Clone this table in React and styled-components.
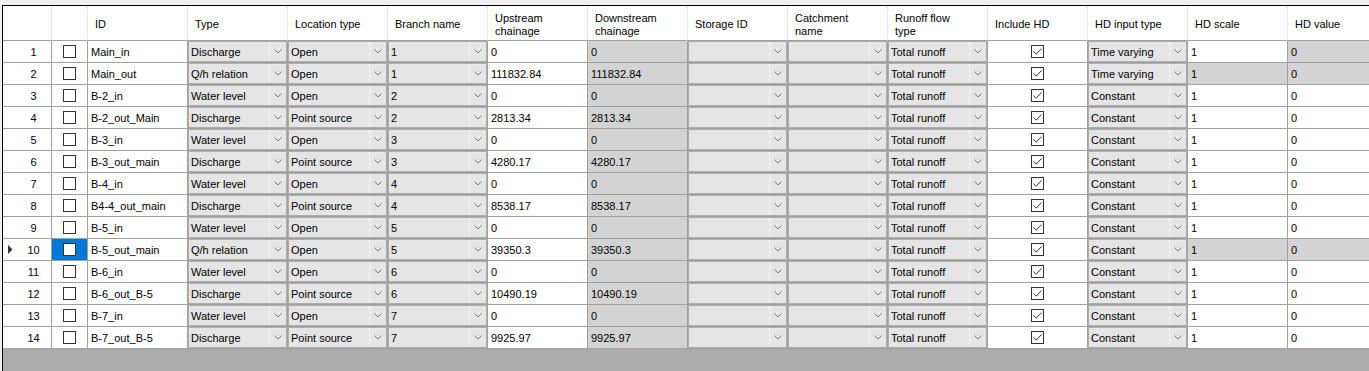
import React from "react";
import styled, { createGlobalStyle } from "styled-components";

const GlobalStyle = createGlobalStyle`
  body {
    margin: 0;
    background: #f0f0f0;
    font-family: "Liberation Sans", Arial, sans-serif;
    font-size: 11px;
    color: #000;
  }
`;

const Frame = styled.div`
  height: 371px;
  box-sizing: border-box;
  padding: 5px 0 0 2px;
  overflow: hidden;
`;

const Grid = styled.div`
  height: 100%;
  box-sizing: border-box;
  border-top: 1px solid #000;
  border-left: 1px solid #000;
  background: #ababab;
  overflow: hidden;
`;

const Row = styled.div`
  display: grid;
  grid-template-columns: 49px 36px repeat(13, 100px);
  height: ${(p) => (p.$header ? 35 : 22)}px;
`;

const HeaderCell = styled.div`
  box-sizing: border-box;
  background: #fff;
  border-right: 1px solid #e5e5e5;
  border-bottom: 1px solid #a0a0a0;
  padding: 3px 4px 0 7px;
  display: flex;
  align-items: center;
  line-height: 13px;
  white-space: pre-line;
`;

const Cell = styled.div`
  box-sizing: border-box;
  border-right: 1px solid #a0a0a0;
  border-bottom: 1px solid #a0a0a0;
  background: ${(p) => (p.$readOnly ? "#d3d3d3" : "#fff")};
  display: flex;
  align-items: center;
  padding-left: 3px;
  white-space: nowrap;
  overflow: hidden;
`;

const RowHeader = styled(Cell)`
  padding: 0;
`;

const Glyph = styled.div`
  width: 14px;
  display: flex;
  justify-content: center;
`;

const RowNumber = styled.div`
  flex: 1;
  text-align: center;
  padding-right: 1px;
`;

const CheckCell = styled(Cell)`
  padding: 0;
  justify-content: center;
  background: ${(p) => (p.$selected ? "#0078d7" : "#fff")};
`;

const Box = styled.div`
  width: 13px;
  height: 13px;
  box-sizing: border-box;
  border: 1px solid #333;
  background: #fff;
  display: flex;
`;

const ComboCell = styled(Cell)`
  padding: 0;
  align-items: stretch;
  background: #fff;
`;

const Combo = styled.div`
  flex: 1;
  display: flex;
  border: 1px solid #adadad;
  background: #e5e5e5;
`;

const ComboText = styled.div`
  flex: 1;
  display: flex;
  align-items: center;
  padding-left: 2px;
  overflow: hidden;
`;

const DropButton = styled.div`
  width: 16px;
  border-left: 1px solid #f4f4f4;
  display: flex;
  align-items: center;
  justify-content: center;
`;

const Chevron = () => (
  <svg width="8" height="5" viewBox="0 0 8 5">
    <path d="M0.5 0.5 L4 4 L7.5 0.5" fill="none" stroke="#7a7a7a" strokeWidth="1" />
  </svg>
);

const Arrow = () => (
  <svg width="5" height="9" viewBox="0 0 5 9">
    <path d="M0 0 L4.5 4.5 L0 9 Z" fill="#333" />
  </svg>
);

const Check = () => (
  <svg width="11" height="11" viewBox="0 0 11 11">
    <path d="M1.5 5.5 L4.2 8.2 L9.5 2.5" fill="none" stroke="#333" strokeWidth="1" />
  </svg>
);

const ComboField = ({ value }) => (
  <ComboCell>
    <Combo>
      <ComboText>{value}</ComboText>
      <DropButton>
        <Chevron />
      </DropButton>
    </Combo>
  </ComboCell>
);

const headers = [
  "",
  "",
  "ID",
  "Type",
  "Location type",
  "Branch name",
  "Upstream\nchainage",
  "Downstream\nchainage",
  "Storage ID",
  "Catchment\nname",
  "Runoff flow\ntype",
  "Include HD",
  "HD input type",
  "HD scale",
  "HD value",
];

const rows = [
  ["Main_in", "Discharge", "Open", "1", "0", "Time varying", { valueRO: true }],
  ["Main_out", "Q/h relation", "Open", "1", "111832.84", "Time varying", { scaleRO: true, valueRO: true }],
  ["B-2_in", "Water level", "Open", "2", "0", "Constant"],
  ["B-2_out_Main", "Discharge", "Point source", "2", "2813.34", "Constant"],
  ["B-3_in", "Water level", "Open", "3", "0", "Constant"],
  ["B-3_out_main", "Discharge", "Point source", "3", "4280.17", "Constant"],
  ["B-4_in", "Water level", "Open", "4", "0", "Constant"],
  ["B4-4_out_main", "Discharge", "Point source", "4", "8538.17", "Constant"],
  ["B-5_in", "Water level", "Open", "5", "0", "Constant"],
  ["B-5_out_main", "Q/h relation", "Open", "5", "39350.3", "Constant", { scaleRO: true, valueRO: true, selected: true }],
  ["B-6_in", "Water level", "Open", "6", "0", "Constant"],
  ["B-6_out_B-5", "Discharge", "Point source", "6", "10490.19", "Constant"],
  ["B-7_in", "Water level", "Open", "7", "0", "Constant"],
  ["B-7_out_B-5", "Discharge", "Point source", "7", "9925.97", "Constant"],
];

export default function App() {
  return (
    <Frame>
      <GlobalStyle />
      <Grid>
        <Row $header>
          {headers.map((h, i) => (
            <HeaderCell key={i}>{h}</HeaderCell>
          ))}
        </Row>
        {rows.map(([id, type, loc, branch, chain, hdType, flags = {}], i) => (
          <Row key={id}>
            <RowHeader>
              <Glyph>{flags.selected && <Arrow />}</Glyph>
              <RowNumber>{i + 1}</RowNumber>
            </RowHeader>
            <CheckCell $selected={flags.selected}>
              <Box />
            </CheckCell>
            <Cell>{id}</Cell>
            <ComboField value={type} />
            <ComboField value={loc} />
            <ComboField value={branch} />
            <Cell>{chain}</Cell>
            <Cell $readOnly>{chain}</Cell>
            <ComboField value="" />
            <ComboField value="" />
            <ComboField value="Total runoff" />
            <CheckCell>
              <Box>
                <Check />
              </Box>
            </CheckCell>
            <ComboField value={hdType} />
            <Cell $readOnly={flags.scaleRO}>1</Cell>
            <Cell $readOnly={flags.valueRO}>0</Cell>
          </Row>
        ))}
      </Grid>
    </Frame>
  );
}
